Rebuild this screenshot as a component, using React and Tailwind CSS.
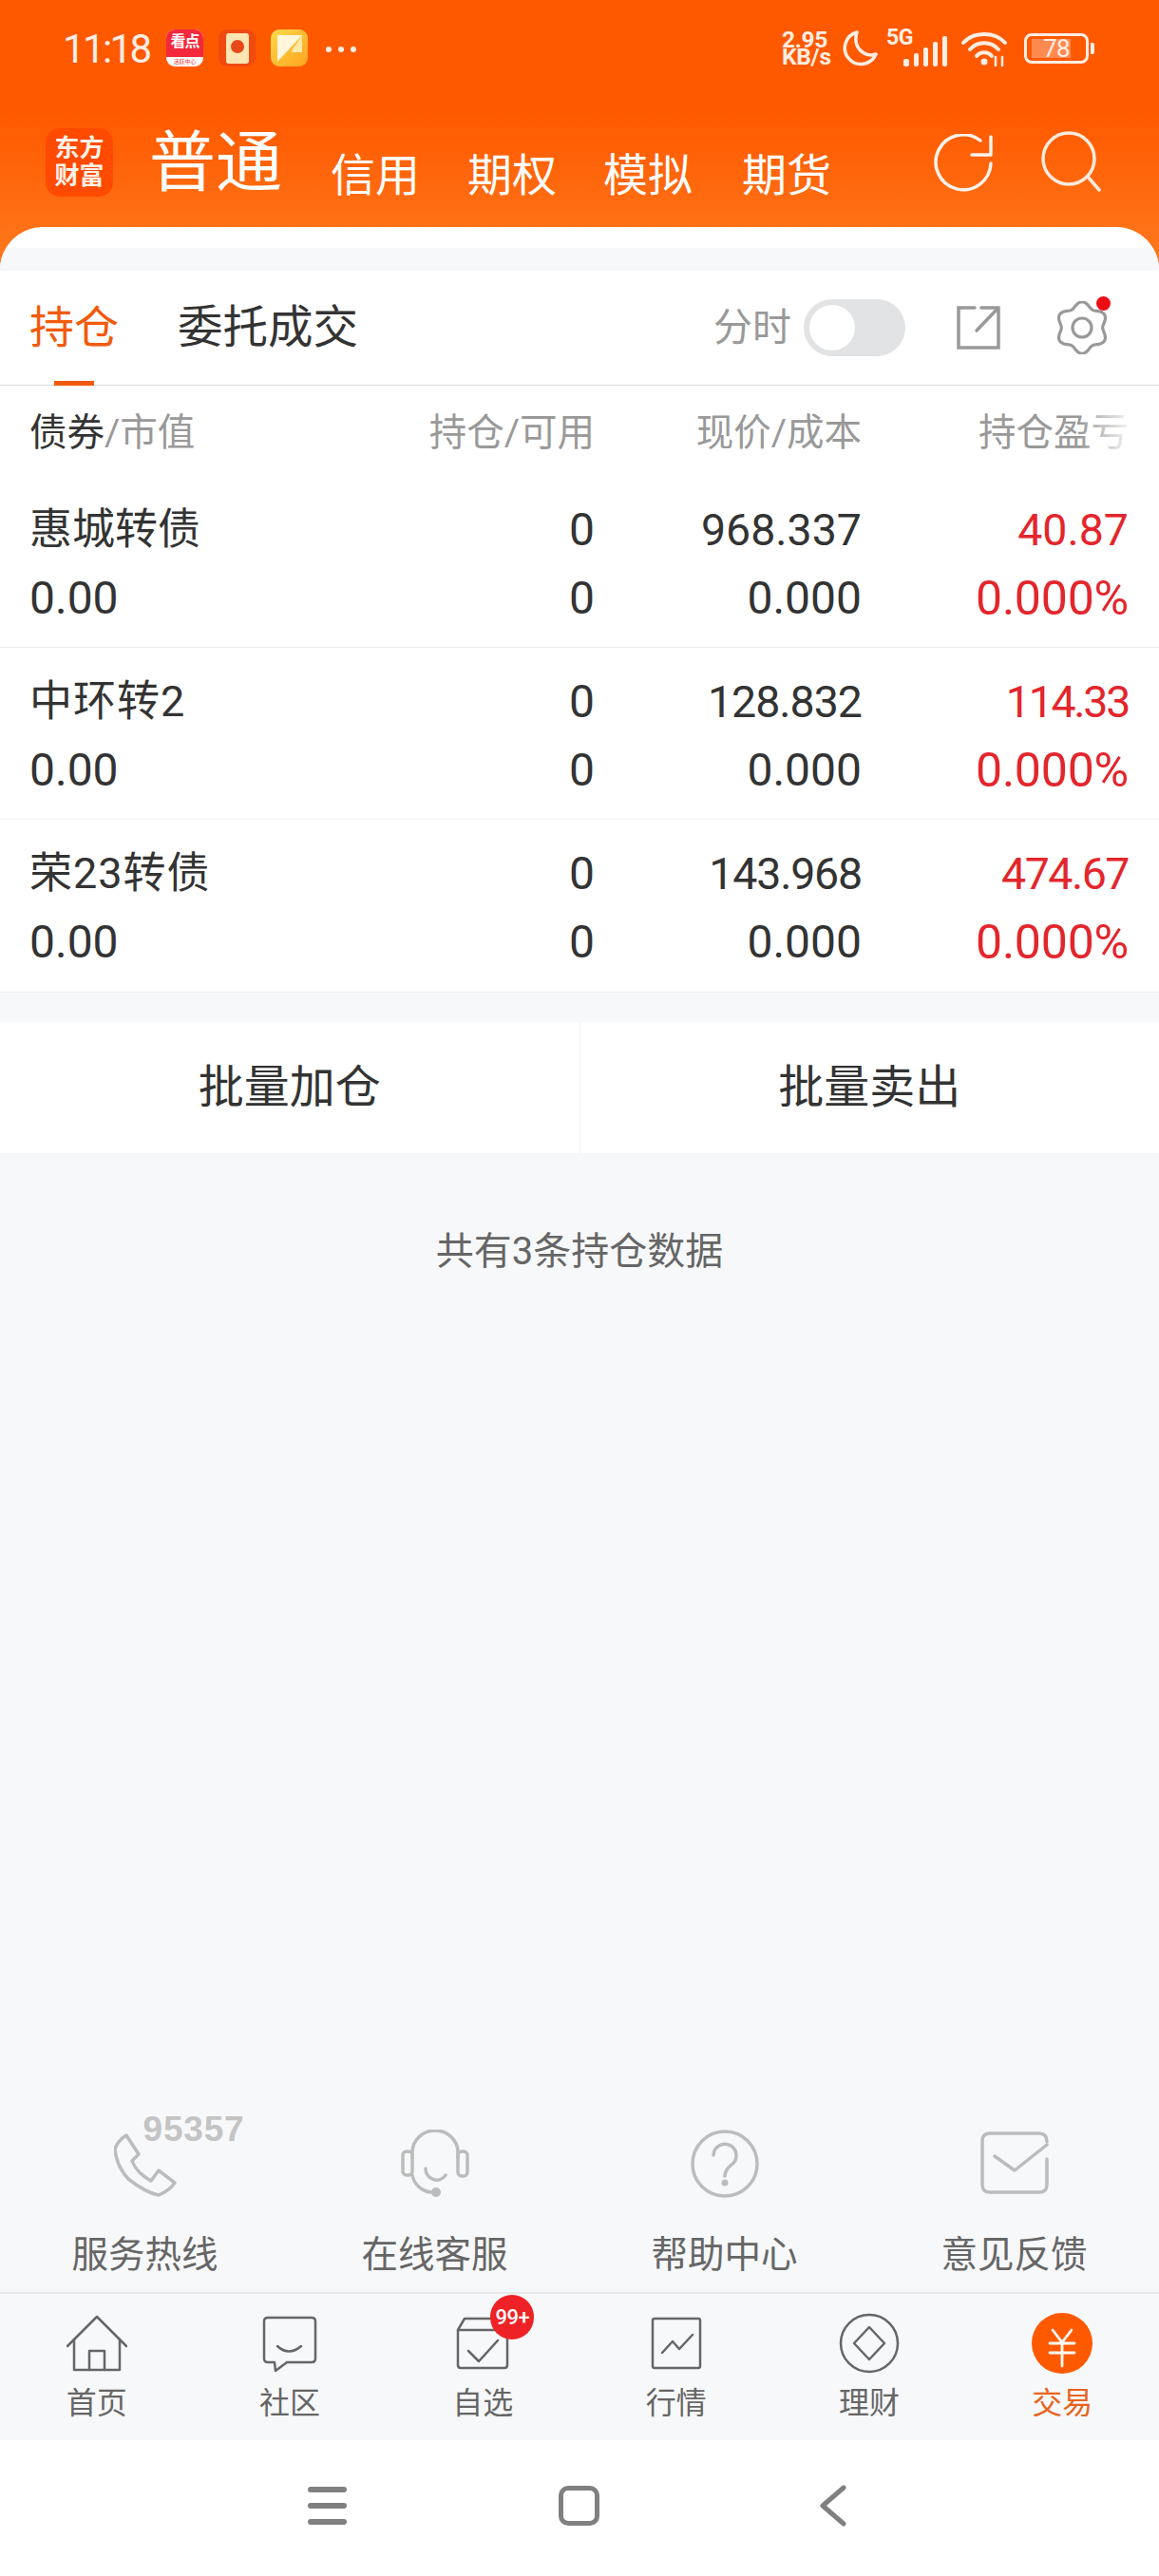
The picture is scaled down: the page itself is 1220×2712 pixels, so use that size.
import React from "react";

const gearPath = (() => {
  const pts = [];
  for (let i = 0; i < 120; i++) {
    const t = (i / 120) * Math.PI * 2;
    const r = 24.5 + 2.8 * Math.cos(6 * t);
    pts.push(`${(28 + r * Math.sin(t)).toFixed(2)} ${(28 - r * Math.cos(t)).toFixed(2)}`);
  }
  return "M" + pts.join("L") + "Z";
})();

const rows = [
  { name: "惠城转债", nameCls: "tracking-[0px]", price: "968.337", priceCls: "", pl: "40.87", plCls: "" },
  { name: "中环转2", nameCls: "tracking-[1px]", price: "128.832", priceCls: "tracking-[-1px]", pl: "114.33", plCls: "tracking-[-2.3px]" },
  { name: "荣23转债", nameCls: "tracking-[1px]", price: "143.968", priceCls: "tracking-[-1.2px]", pl: "474.67", plCls: "tracking-[-1.5px]" },
];

const services = [
  {
    label: "服务热线",
    icon: (
      <div className="relative w-[72px] h-[72px]">
        <svg className="absolute left-[3px] top-[4px]" width="68" height="68" viewBox="0 0 68 68" fill="none" stroke="#bcbcbc" strokeWidth="3.5" strokeLinejoin="round">
          <path d="M13 2L26 22L19 29C22 37 30 45 39 50L47 39L64 52C60 58 54 62 47 65C36 63 24 55 15 48C7 39 2 28 1 17C2 11 8 5 13 2Z" />
        </svg>
        <span className="absolute left-[34px] top-[-15px] text-[37px] leading-[30px] font-bold text-[#c4c4c4] [font-family:'Liberation_Sans',sans-serif] tracking-[0.8px]">95357</span>
      </div>
    ),
  },
  {
    label: "在线客服",
    icon: (
      <svg width="72" height="72" viewBox="0 0 72 72" fill="none" stroke="#bcbcbc" strokeWidth="3.5" strokeLinecap="round">
        <path d="M12 30V24A24 23 0 0 1 60 24V30" />
        <rect x="2" y="23" width="10" height="25" rx="4" />
        <rect x="60" y="23" width="10" height="26" rx="4" />
        <path d="M12 48C14 58 22 65 32 66" />
        <path d="M26 41C26 52 40 58 47 48" />
        <circle cx="37" cy="66" r="5" fill="#bcbcbc" stroke="none" />
      </svg>
    ),
  },
  {
    label: "帮助中心",
    icon: (
      <svg width="72" height="72" viewBox="0 0 72 72" fill="none" stroke="#bcbcbc" strokeWidth="3.5" strokeLinecap="round">
        <circle cx="36" cy="36" r="34" />
        <path d="M24 27A12 12 0 1 1 43 37C38 41 36 44 36 49" />
        <circle cx="36" cy="56" r="3.5" fill="#bcbcbc" stroke="none" />
      </svg>
    ),
  },
  {
    label: "意见反馈",
    icon: (
      <svg width="72" height="72" viewBox="0 0 72 72" fill="none" stroke="#bcbcbc" strokeWidth="3.5" strokeLinecap="round" strokeLinejoin="round">
        <path d="M70 31V58Q70 66 62 66H10Q2 66 2 58V12Q2 4 10 4H62Q70 4 70 13" />
        <path d="M15 28L36 43L70 16" />
      </svg>
    ),
  },
];

const S = { fill: "none", stroke: "#666", strokeWidth: 2.5, strokeLinecap: "round", strokeLinejoin: "round" };

const tabs = [
  {
    label: "首页",
    icon: (
      <svg width="64" height="60" viewBox="0 0 64 60" {...S}>
        <path d="M1 33L32 2L63 33" />
        <path d="M8 26V58H56V26" />
        <path d="M24 58V38H40V58" />
      </svg>
    ),
  },
  {
    label: "社区",
    icon: (
      <svg width="58" height="60" viewBox="0 0 58 60" {...S}>
        <path d="M6 3H52Q56 3 56 7V46Q56 50 52 50H26L14 59L13 50H6Q2 50 2 46V7Q2 3 6 3Z" />
        <path d="M16 33Q28 44 41 33" />
      </svg>
    ),
  },
  {
    label: "自选",
    icon: (
      <div className="relative w-[56px] h-[60px]">
        <svg width="56" height="60" viewBox="0 0 56 60" {...S}>
          <path d="M2 16V53Q2 56 5 56H51Q54 56 54 53V16H2Z" />
          <path d="M2 16L9 4H46" />
          <path d="M13 38L24 49L44 27" />
        </svg>
        <span className="absolute left-[36px] top-[-21px] w-[46px] h-[47px] rounded-full bg-[#ee2226] flex items-center justify-center text-white text-[22px] leading-none font-medium tracking-[-0.5px]">99+</span>
      </div>
    ),
  },
  {
    label: "行情",
    icon: (
      <svg width="54" height="60" viewBox="0 0 54 60" {...S}>
        <rect x="2" y="4" width="50" height="52" rx="2" />
        <path d="M12 40L23 28L30 36L44 21" />
      </svg>
    ),
  },
  {
    label: "理财",
    icon: (
      <svg width="64" height="64" viewBox="0 0 64 64" {...S}>
        <circle cx="32" cy="32" r="30" />
        <path d="M32 15L48 32L32 49L16 32Z" />
      </svg>
    ),
  },
  {
    label: "交易",
    active: true,
    icon: (
      <svg width="64" height="64" viewBox="0 0 64 64" fill="none">
        <circle cx="32" cy="32" r="32" fill="#ff5900" />
        <path d="M22 18L32 31L42 18M19 32H45M19 42H45M32 31V56" stroke="#fff" strokeWidth="2.8" strokeLinecap="round" />
      </svg>
    ),
  },
];

function StatusBar() {
  return (
    <div className="h-[104px] flex items-center text-[#ffeee3]">
      <span className="ml-[66px] w-[87px] text-[42px] leading-none tracking-[-2.6px] mt-[-1px]">11:18</span>
      <div className="ml-[22px] w-[39px] h-[39px] mt-[-3px] rounded-[9px] overflow-hidden bg-white flex flex-col">
        <div className="h-[29px] bg-[#f4283c] text-white text-[16px] leading-[26px] font-bold text-center tracking-[-1px]">看点</div>
        <div className="flex-1 text-[#e33] text-[6px] leading-[10px] text-center">活跃中心</div>
      </div>
      <div className="ml-[16px] w-[39px] h-[39px] mt-[-3px] rounded-[9px] bg-[#f04a10] flex items-center justify-center">
        <div className="w-[24px] h-[32px] rounded-[3px] bg-[#fde6b4] relative overflow-hidden">
          <div className="absolute left-[5px] top-[7px] w-[14px] h-[14px] rounded-full bg-[#e8481a]" />
        </div>
      </div>
      <div className="ml-[16px] w-[39px] h-[39px] mt-[-3px] rounded-[9px] bg-[linear-gradient(135deg,#ffd84a,#ffa41f)] flex items-center justify-center">
        <svg width="26" height="28" viewBox="0 0 26 28"><path d="M0 0H26L0 28Z" fill="#fff6dc" /><path d="M26 0V18H14Z" fill="#ffe9a8" /></svg>
      </div>
      <div className="ml-[19px] flex gap-[7px]">
        <span className="w-[6px] h-[6px] rounded-full bg-[#ffeee3]" />
        <span className="w-[6px] h-[6px] rounded-full bg-[#ffeee3]" />
        <span className="w-[6px] h-[6px] rounded-full bg-[#ffeee3]" />
      </div>
      <div className="ml-[448px] w-[52px] font-bold mt-[-3px] text-[24.5px] leading-[18px] tracking-[-0.3px]">
        2.95<br />KB/s
      </div>
      <svg className="ml-[12px] mt-[-3px]" width="37" height="38" viewBox="0 0 37 38" fill="none" stroke="#ffeee3" strokeWidth="3.5" strokeLinejoin="round">
        <path d="M15 2A17 17 0 1 0 35 25C24 29 10 19 15 2Z" />
      </svg>
      <div className="relative ml-[9px] w-[64px] h-[37px] mt-[-1px]">
        <span className="absolute left-0 top-[-5px] text-[23px] leading-[24px] font-bold tracking-[-0.5px]">5G</span>
        <div className="absolute right-0 bottom-0 flex items-end gap-[5px]">
          <span className="w-[6px] h-[8px] rounded-[2px] bg-[#ffeee3]" />
          <span className="w-[5px] h-[14px] rounded-[2px] bg-[#ffeee3]" />
          <span className="w-[5px] h-[20px] rounded-[2px] bg-[#ffeee3]" />
          <span className="w-[5px] h-[26px] rounded-[2px] bg-[#ffeee3]" />
          <span className="w-[5px] h-[32px] rounded-[2px] bg-[#ffeee3]" />
        </div>
      </div>
      <svg className="ml-[15px] mt-[-2px]" width="48" height="38" viewBox="0 0 48 38" fill="none" stroke="#ffeee3" strokeWidth="4" strokeLinecap="round">
        <path d="M2 13C13 1 35 1 46 13" />
        <path d="M9 20C17 11 31 11 39 20" />
        <path d="M16 27C20 22 28 22 32 27" />
        <circle cx="24" cy="33" r="3.5" fill="#ffeee3" stroke="none" />
        <path d="M36 28V37M43 28V37" strokeWidth="2.5" />
      </svg>
      <div className="ml-[18px] relative w-[68px] h-[32px] rounded-[8px] border-[3px] border-[#ffeee3] mt-[-2px]">
        <div className="absolute left-[5px] top-[3px] bottom-[3px] w-[41px] bg-[#ff8a50]" />
        <span className="absolute left-[17px] top-0 text-[26px] leading-[26px] tracking-[-0.5px] text-[#ffeee3]">78</span>
        <span className="absolute right-[-9px] top-[7px] w-[4px] h-[12px] rounded-r-[2px] bg-[#ffeee3]" />
      </div>
    </div>
  );
}

function NavRow() {
  return (
    <div className="h-[135px] flex items-start text-white">
      <div className="ml-[48px] mt-[31px] w-[71px] h-[72px] rounded-[15px] bg-[#ff4a00] flex items-center justify-center text-center text-[26px] leading-[29px] font-bold text-[#fff3ea]">
        东方<br />财富
      </div>
      <span className="ml-[38px] mt-[33px] text-[70px] leading-[70px]">普通</span>
      <span className="ml-[51px] mt-[57px] text-[47px] leading-[47px]">信用</span>
      <span className="ml-[50px] mt-[57px] text-[47px] leading-[47px]">期权</span>
      <span className="ml-[49px] mt-[57px] text-[47px] leading-[47px]">模拟</span>
      <span className="ml-[52px] mt-[57px] text-[47px] leading-[47px]">期货</span>
      <svg className="ml-[108px] mt-[37px]" width="63" height="62" viewBox="0 0 63 62" fill="none" stroke="#fff3ea" strokeWidth="3.5" strokeLinecap="round" strokeLinejoin="round">
        <path d="M49 7A29 29 0 1 0 60 31" />
        <path d="M40 22H60V3" />
      </svg>
      <svg className="ml-[50px] mt-[34px]" width="63" height="64" viewBox="0 0 63 64" fill="none" stroke="#ffeadc" strokeWidth="3.5" strokeLinecap="round">
        <circle cx="29" cy="29" r="27" />
        <path d="M49 48L61 62" />
      </svg>
    </div>
  );
}

function Tabs() {
  return (
    <div className="relative h-[121px] bg-white border-b border-[#dedede] flex items-center">
      <span className="ml-[31px] text-[47px] leading-[60px] text-[#f25a0d]">持仓</span>
      <span className="ml-[62px] text-[47.5px] leading-[60px] text-[#333]">委托成交</span>
      <span className="absolute left-[57px] bottom-[-1px] w-[42px] h-[5px] bg-[#f25a0d]" />
      <span className="ml-[374px] text-[41px] leading-[50px] text-[#999]">分时</span>
      <div className="ml-[13px] w-[107px] h-[60px] rounded-full bg-[#e2e3e5] pl-[6px] flex items-center">
        <div className="w-[48px] h-[48px] rounded-full bg-white" />
      </div>
      <svg className="ml-[54px]" width="46" height="46" viewBox="0 0 46 46" fill="none" stroke="#999" strokeWidth="3.5" strokeLinecap="round">
        <path d="M26 2H44V44H2V2H19" />
        <path d="M21 26L43 3" />
      </svg>
      <div className="relative ml-[58px] w-[56px] h-[56px]">
        <svg width="56" height="56" viewBox="0 0 56 56" fill="none" stroke="#999" strokeWidth="3.2">
          <path d={gearPath} />
          <circle cx="28" cy="28" r="10" />
        </svg>
        <span className="absolute right-[-2px] top-[-5px] w-[15px] h-[15px] rounded-full bg-[#ee0c14]" />
      </div>
    </div>
  );
}

function Table() {
  return (
    <div className="bg-white border-b border-[#eeeff1]">
      <div className="h-[95px] pl-[31px] pr-[32px] flex items-start pt-[28px] text-[39.5px] leading-[44px] text-[#999]">
        <div className="w-[295px]"><span className="text-[#333]">债券</span>/市值</div>
        <div className="w-[300px] text-right">持仓/可用</div>
        <div className="w-[281px] text-right">现价/成本</div>
        <div className="relative w-[281px] text-right">
          持仓盈亏
          <span className="absolute right-[-4px] top-0 w-[56px] h-[44px] bg-[linear-gradient(to_right,rgba(255,255,255,0),rgba(255,255,255,0.95))]" />
        </div>
      </div>
      {rows.map((r, i) => (
        <div key={r.name} className={`h-[181px] pl-[31px] pr-[32px] pt-[21px] text-[46.5px] leading-[72px] text-[#333] ${i < 2 ? "border-b border-[#eeeeee]" : ""}`}>
          <div className="flex">
            <div className={`w-[295px] text-[45px] ${r.nameCls}`}>{r.name}</div>
            <div className="w-[300px] text-right text-[48px]">0</div>
            <div className={`w-[281px] text-right ${r.priceCls}`}>{r.price}</div>
            <div className={`w-[281px] text-right text-[#e3262c] ${r.plCls}`}>{r.pl}</div>
          </div>
          <div className="flex">
            <div className="w-[295px] text-[48px]">0.00</div>
            <div className="w-[300px] text-right text-[48px]">0</div>
            <div className="w-[281px] text-right text-[48px]">0.000</div>
            <div className="w-[281px] text-right text-[50px] tracking-[-0.2px] text-[#e3262c]">0.000%</div>
          </div>
        </div>
      ))}
    </div>
  );
}

export default function App() {
  return (
    <div className="w-[1220px] h-[2712px] flex flex-col overflow-hidden bg-[#f7f8fa] [font-family:Roboto,'Noto_Sans_CJK_SC',sans-serif]">
      <div className="bg-[linear-gradient(to_bottom,#ff5900_0px,#ff5900_120px,#ff7a1e_285px)]">
        <StatusBar />
        <NavRow />
        <div className="h-[46px] rounded-t-[45px] overflow-hidden bg-white">
          <div className="h-[22px]" />
          <div className="h-[24px] bg-[#f7f8fa]" />
        </div>
      </div>
      <Tabs />
      <Table />
      <div className="h-[31px] shrink-0" />
      <div className="h-[138px] shrink-0 bg-white flex">
        <div className="flex-1 flex items-center justify-center text-[48px] text-[#333]">批量加仓</div>
        <div className="w-px bg-[#f2f2f2] my-0" />
        <div className="flex-1 flex items-center justify-center text-[48px] text-[#333]">批量卖出</div>
      </div>
      <div className="flex-1 flex flex-col">
        <div className="pt-[80px] text-center text-[40px] leading-[48px] text-[#666]">共有3条持仓数据</div>
        <div className="mt-auto grid grid-cols-4 pb-[14px]">
          {services.map((s) => (
            <div key={s.label} className="flex flex-col items-center">
              <div className="h-[72px]">{s.icon}</div>
              <div className="mt-[35px] text-[38.5px] leading-[50px] text-[#666]">{s.label}</div>
            </div>
          ))}
        </div>
      </div>
      <div className="h-[156px] shrink-0 border-t-2 border-[#e8e9eb] grid grid-cols-6">
        {tabs.map((t) => (
          <div key={t.label} className="flex flex-col items-center pt-[20px]">
            <div className="h-[64px] flex items-center justify-center">{t.icon}</div>
            <div className={`mt-[11px] text-[32px] leading-[40px] ${t.active ? "text-[#e8641e]" : "text-[#666]"}`}>{t.label}</div>
          </div>
        ))}
      </div>
      <div className="h-[143px] shrink-0 bg-white flex items-center pb-[6px]">
        <div className="ml-[324px] w-[41px] flex flex-col gap-[11px]">
          <span className="h-[6px] rounded-full bg-[#808080]" />
          <span className="h-[6px] rounded-full bg-[#808080]" />
          <span className="h-[6px] rounded-full bg-[#808080]" />
        </div>
        <div className="ml-[223px] w-[43px] h-[42px] rounded-[10px] border-[5px] border-[#808080]" />
        <svg className="ml-[232px]" width="28" height="44" viewBox="0 0 28 44" fill="none" stroke="#808080" strokeWidth="5" strokeLinecap="round" strokeLinejoin="round">
          <path d="M25 3L3 22L25 41" />
        </svg>
      </div>
    </div>
  );
}
